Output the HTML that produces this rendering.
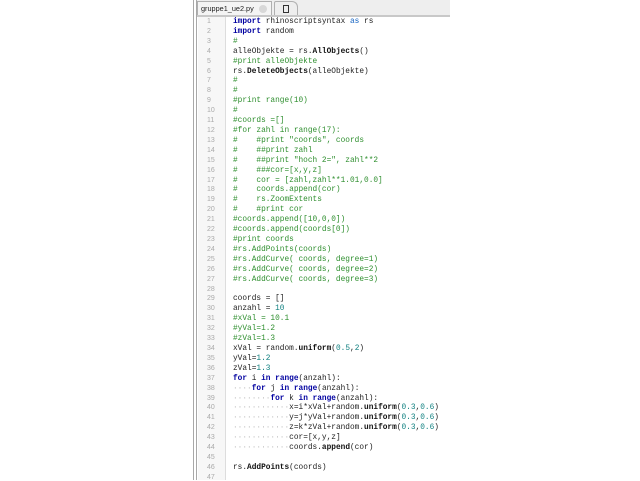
<!DOCTYPE html>
<html><head><style>
body{margin:0;width:640px;height:480px;background:#fff;position:relative;overflow:hidden;font-family:"Liberation Mono",monospace}
.vl{position:absolute;top:0;height:480px;width:1px;background:#a8a8a8}
#tabbar{position:absolute;left:197px;top:0;width:253px;height:15px;background:#eeeeee;border-bottom:2px solid #c8c8c8}
#tab1{position:absolute;left:0;top:1px;width:75px;height:14px;background:#f4f4f4;border:1px solid #b0b0b0;border-bottom:none;font:7.3px "Liberation Sans",sans-serif;color:#222;line-height:14px;padding-left:3px;box-sizing:border-box;white-space:nowrap;overflow:hidden}
#tab1 i{position:absolute;right:4px;top:3px;width:8px;height:8px;border-radius:50%;background:#d8d8d8}
#tab2{position:absolute;left:77px;top:1px;width:24px;height:14px;border:1px solid #b0b0b0;border-bottom:none;border-radius:2px 6px 0 0;box-sizing:border-box}
#tab2 b{position:absolute;left:8px;top:3px;width:6px;height:8px;border:1px solid #333;box-sizing:border-box}
#gut{position:absolute;left:198px;top:17px;width:27px;height:463px;background:#f7f7f7;border-right:1px solid #ddd}
.ln{position:absolute;left:207px;font-size:7px;color:#aaa;font-family:"Liberation Sans",sans-serif}
.c{position:absolute;left:233px;font-size:7.8px;color:#222;white-space:pre;line-height:10px}
.k{color:#0000a0;font-weight:bold}
.g{color:#2f8f2f}
.n{color:#108080}
.b{font-weight:bold;color:#111}
.d{color:#bbb}
</style></head><body>
<div class="vl" style="left:193px"></div><div class="vl" style="left:196px"></div>
<div id="gut"></div>
<div id="tabbar"><div id="tab1">gruppe1_ue2.py<i></i></div><div id="tab2"><b></b></div></div>
<div id="code"></div>
<script>
var L=[
'<span class="k">import</span> rhinoscriptsyntax <span class="k" style="font-weight:normal;color:#1060c0">as</span> rs',
'<span class="k">import</span> random',
'<span class="g">#</span>',
'alleObjekte = rs.<span class="b">AllObjects</span>()',
'<span class="g">#print alleObjekte</span>',
'rs.<span class="b">DeleteObjects</span>(alleObjekte)',
'<span class="g">#</span>','<span class="g">#</span>',
'<span class="g">#print range(10)</span>','<span class="g">#</span>',
'<span class="g">#coords =[]</span>',
'<span class="g">#for zahl in range(17):</span>',
'<span class="g">#    #print "coords", coords</span>',
'<span class="g">#    ##print zahl</span>',
'<span class="g">#    ##print "hoch 2=", zahl**2</span>',
'<span class="g">#    ###cor=[x,y,z]</span>',
'<span class="g">#    cor = [zahl,zahl**1.01,0.0]</span>',
'<span class="g">#    coords.append(cor)</span>',
'<span class="g">#    rs.ZoomExtents</span>',
'<span class="g">#    #print cor</span>',
'<span class="g">#coords.append([10,0,0])</span>',
'<span class="g">#coords.append(coords[0])</span>',
'<span class="g">#print coords</span>',
'<span class="g">#rs.AddPoints(coords)</span>',
'<span class="g">#rs.AddCurve( coords, degree=1)</span>',
'<span class="g">#rs.AddCurve( coords, degree=2)</span>',
'<span class="g">#rs.AddCurve( coords, degree=3)</span>',
'',
'coords = []',
'anzahl = <span class="n">10</span>',
'<span class="g">#xVal = 10.1</span>',
'<span class="g">#yVal=1.2</span>',
'<span class="g">#zVal=1.3</span>',
'xVal = random.<span class="b">uniform</span>(<span class="n">0.5</span>,<span class="n">2</span>)',
'yVal=<span class="n">1.2</span>',
'zVal=<span class="n">1.3</span>',
'<span class="k">for</span> i <span class="k">in</span> <span class="k">range</span>(anzahl):',
'<span class="d">····</span><span class="k">for</span> j <span class="k">in</span> <span class="k">range</span>(anzahl):',
'<span class="d">········</span><span class="k">for</span> k <span class="k">in</span> <span class="k">range</span>(anzahl):',
'<span class="d">············</span>x=i*xVal+random.<span class="b">uniform</span>(<span class="n">0.3</span>,<span class="n">0.6</span>)',
'<span class="d">············</span>y=j*yVal+random.<span class="b">uniform</span>(<span class="n">0.3</span>,<span class="n">0.6</span>)',
'<span class="d">············</span>z=k*zVal+random.<span class="b">uniform</span>(<span class="n">0.3</span>,<span class="n">0.6</span>)',
'<span class="d">············</span>cor=[x,y,z]',
'<span class="d">············</span>coords.<span class="b">append</span>(cor)',
'',
'rs.<span class="b">AddPoints</span>(coords)',
''];
var h='';
for(var i=0;i<L.length;i++){var y=17+i*9.91;
h+='<div class="ln" style="top:'+(y+1)+'px">'+(i+1)+'</div><div class="c" style="top:'+y+'px">'+L[i]+'</div>';}
document.getElementById('code').innerHTML=h;
</script>
</body></html>
